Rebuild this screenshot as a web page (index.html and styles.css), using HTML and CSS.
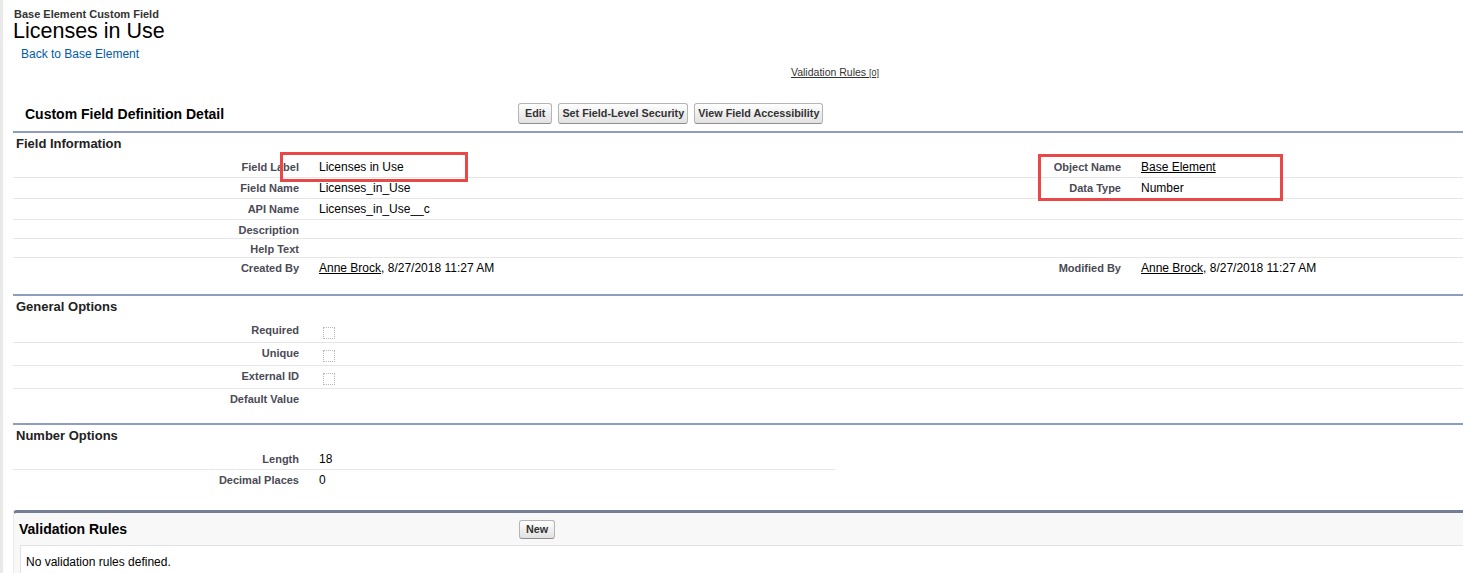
FILE: index.html
```html
<!DOCTYPE html>
<html>
<head>
<meta charset="utf-8">
<title>Licenses in Use</title>
<link rel="stylesheet" href="styles.css">
</head>
<body>
<div class="page">
  <div class="ptitle">
    <div class="ptype">Base Element Custom Field</div>
    <h1 class="pname">Licenses in Use</h1>
    <div class="crumb"><a href="#">Back to Base Element</a></div>
  </div>
  <div class="hover-links"><a href="#">Validation Rules <span class="count">[0]</span></a></div>

  <div class="detail">
    <div class="pb-header">
      <h2 class="pb-title">Custom Field Definition Detail</h2>
      <div class="pb-buttons">
        <button class="btn btn-short">Edit</button>
        <button class="btn">Set Field-Level Security</button>
        <button class="btn">View Field Accessibility</button>
      </div>
    </div>

    <h3 class="sub first">Field Information</h3>
    <div class="list list-first">
      <div class="row"><div class="lbl">Field Label</div><div class="val">Licenses in Use</div><div class="lbl">Object Name</div><div class="val val-last"><a href="#">Base Element</a></div></div>
      <div class="row"><div class="lbl">Field Name</div><div class="val">Licenses_in_Use</div><div class="lbl">Data Type</div><div class="val val-last">Number</div></div>
      <div class="row"><div class="lbl">API Name</div><div class="val">Licenses_in_Use__c</div><div class="lbl"></div><div class="val val-last"></div></div>
      <div class="row"><div class="lbl">Description</div><div class="val"></div><div class="lbl"></div><div class="val val-last"></div></div>
      <div class="row"><div class="lbl">Help Text</div><div class="val"></div><div class="lbl"></div><div class="val val-last"></div></div>
      <div class="row"><div class="lbl">Created By</div><div class="val"><a href="#">Anne Brock</a>, 8/27/2018 11:27 AM</div><div class="lbl">Modified By</div><div class="val val-last"><a href="#">Anne Brock</a>, 8/27/2018 11:27 AM</div></div>
    </div>

    <h3 class="sub">General Options</h3>
    <div class="list list-general">
      <div class="row"><div class="lbl">Required</div><div class="val val-check"><span class="chk"></span></div></div>
      <div class="row"><div class="lbl">Unique</div><div class="val val-check"><span class="chk"></span></div></div>
      <div class="row"><div class="lbl">External ID</div><div class="val val-check"><span class="chk"></span></div></div>
      <div class="row"><div class="lbl">Default Value</div><div class="val"></div></div>
    </div>

    <h3 class="sub">Number Options</h3>
    <div class="list list-narrow">
      <div class="row"><div class="lbl">Length</div><div class="val">18</div></div>
      <div class="row"><div class="lbl">Decimal Places</div><div class="val">0</div></div>
    </div>
  </div>

  <div class="related">
    <div class="rl-header">
      <h3 class="rl-title">Validation Rules</h3>
      <div class="pb-buttons"><button class="btn btn-short btn-small">New</button></div>
    </div>
    <div class="rl-body">No validation rules defined.</div>
  </div>

  <div class="mark mark-1"></div>
  <div class="mark mark-2"></div>
</div>
</body>
</html>
```

FILE: styles.css
```css
html {
  overflow: hidden;
  background: #fff;
}

body {
  margin: 0;
  min-height: 573px;
  border-left: 3px solid #e9e9e9;
  font-family: "Liberation Sans", Arial, sans-serif;
  font-size: 12px;
  color: #000;
}

.page {
  position: relative;
  margin-left: 10px;
  width: 1450px;
  padding-top: 8px;
}

.ptype {
  padding-left: 1px;
  font-size: 11px;
  font-weight: bold;
  line-height: 12px;
  color: #333;
}

.pname {
  margin: 0;
  font-size: 21.5px;
  font-weight: normal;
  line-height: 22px;
  color: #000;
}

.crumb {
  margin-top: 5px;
  padding-left: 8px;
  line-height: 14px;
}

.crumb a {
  color: #015ba7;
  text-decoration: none;
  font-size: 12px;
}

.hover-links {
  margin-top: 5px;
  padding-left: 194px;
  text-align: center;
  font-size: 10.5px;
  line-height: 13px;
}

.hover-links a {
  color: #333;
  text-decoration: underline;
}

.count {
  font-size: 9px;
}

.pb-header {
  display: flex;
  align-items: center;
  height: 35px;
  margin-top: 16px;
  border-bottom: 2px solid #8e9dbe;
}

.pb-title {
  width: 505px;
  box-sizing: border-box;
  margin: 0;
  padding-left: 12px;
  font-size: 14px;
  font-weight: bold;
  color: #000;
}

.pb-buttons {
  display: flex;
  gap: 6px;
}

.btn {
  font-family: "Liberation Sans", Arial, sans-serif;
  font-size: 10.8px;
  font-weight: bold;
  line-height: 13px;
  color: #333;
  padding: 3px 3px;
  border: 1px solid #b5b5b5;
  border-bottom-color: #8f8f8f;
  border-radius: 3px;
  background: linear-gradient(#ffffff, #ececec 60%, #e2e2e2);
  margin: 0;
}

.btn-short {
  padding-left: 6px;
  padding-right: 6px;
}

.btn-small {
  padding-top: 2px;
  padding-bottom: 2px;
}

.sub {
  margin: 15px 0 0;
  padding: 3px 0 6px 3px;
  border-top: 2px solid #8e9dbe;
  font-size: 13px;
  font-weight: bold;
  line-height: 15px;
  color: #222;
}

.sub.first {
  margin-top: 0;
  padding-top: 3px;
  border-top: 0;
}

.list-first {
  padding-bottom: 1px;
}

.list-general {
  padding-bottom: 1px;
}

.row {
  display: flex;
  border-bottom: 1px solid #e6e6e6;
}

.row:last-child {
  border-bottom: 0;
}

.list-narrow {
  width: 822px;
}

.lbl {
  width: 296px;
  flex: none;
  box-sizing: border-box;
  padding: 4px 10px 2px 2px;
  text-align: right;
  font-size: 11px;
  font-weight: bold;
  line-height: 12px;
  color: #4a4a56;
}

.val {
  width: 526px;
  flex: none;
  box-sizing: border-box;
  padding: 3px 10px;
  font-size: 12px;
  line-height: 14px;
  color: #000;
}

.val-last {
  width: auto;
  flex: 1;
}

.val a {
  color: #000;
  text-decoration: underline;
}

.val-check {
  padding-top: 7px;
  line-height: 12px;
}

.chk {
  display: block;
  width: 10px;
  height: 10px;
  margin-left: 4px;
  border: 1px dotted #b9b9b9;
}

.related {
  margin-top: 20px;
  background: #f8f8f8;
  border: 1px solid #eaeaea;
  border-right: 0;
  border-top: 3px solid #747e96;
  border-radius: 4px 0 0 0;
  padding-bottom: 6px;
}

.rl-header {
  display: flex;
  align-items: center;
  height: 32px;
}

.rl-title {
  width: 505px;
  box-sizing: border-box;
  margin: 0;
  padding-left: 5px;
  font-size: 14px;
  font-weight: bold;
  color: #000;
}

.rl-body {
  margin: 0 0 0 6px;
  padding: 9px 5px 8px;
  background: #fff;
  border: 1px solid #e0e3e5;
  border-right: 0;
  font-size: 12px;
  line-height: 14px;
  color: #000;
}

.mark {
  position: absolute;
  border: 3px solid #e84848;
  box-sizing: border-box;
}

.mark-1 {
  left: 267px;
  top: 152px;
  width: 188px;
  height: 30px;
}

.mark-2 {
  left: 1025px;
  top: 154px;
  width: 245px;
  height: 47px;
}
```
